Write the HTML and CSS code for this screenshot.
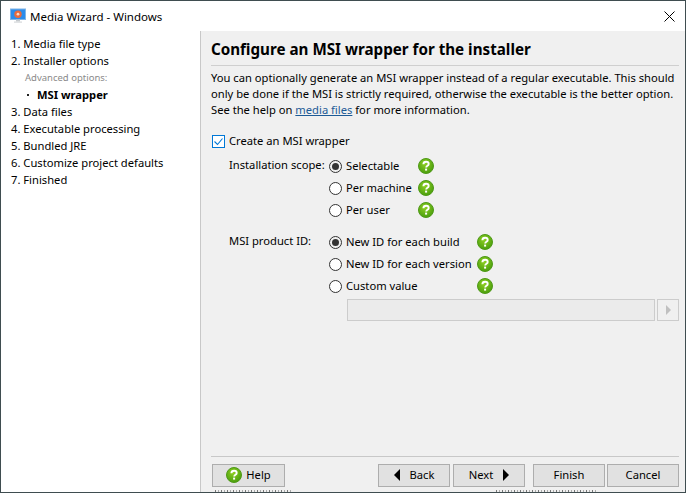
FILE: index.html
```html
<!DOCTYPE html>
<html lang="en">
<head>
<meta charset="utf-8">
<title>Media Wizard - Windows</title>
<link rel="stylesheet" href="styles.css">
</head>
<body>
<svg class="defs" width="0" height="0" aria-hidden="true">
  <defs>
    <radialGradient id="hg" cx="45%" cy="35%" r="70%">
      <stop offset="0" stop-color="#8fd022"/>
      <stop offset="1" stop-color="#459a0c"/>
    </radialGradient>
    <symbol id="help" viewBox="0 0 16 16">
      <circle cx="8" cy="8" r="7.5" fill="url(#hg)" stroke="#4f9a18" stroke-width="1"/>
      <path d="M5.4 6.2c0-1.6 1.2-2.5 2.7-2.5s2.6.9 2.6 2.2c0 1.9-2.4 1.9-2.5 3.6" fill="none" stroke="#fff" stroke-width="1.9"/>
      <rect x="7.1" y="10.6" width="2" height="2" fill="#fff"/>
    </symbol>
  </defs>
</svg>
<div class="window">
  <header class="titlebar">
    <svg class="appicon" viewBox="0 0 16 16" width="16" height="16" aria-hidden="true">
      <rect x="0.5" y="1" width="15" height="10.5" fill="#2a8cec" stroke="#7fb4e6"/>
      <circle cx="8" cy="6.2" r="3.7" fill="#ea6a3c"/>
      <circle cx="8" cy="6.2" r="1.4" fill="#f7d8c8"/>
      <rect x="6" y="11.5" width="4" height="2" fill="#c4c8cc"/>
      <rect x="4" y="13.5" width="8" height="1.2" fill="#d4d7da"/>
    </svg>
    <span class="title">Media Wizard - Windows</span>
    <svg class="close" viewBox="0 0 11 11" width="11" height="11" aria-hidden="true">
      <path d="M.5.5l10 10M10.5.5l-10 10" stroke="#000" stroke-width="1" fill="none"/>
    </svg>
  </header>
  <div class="content">
    <nav class="steps">
      <div class="step">1. Media file type</div>
      <div class="step">2. Installer options</div>
      <div class="step sub-head">Advanced options:</div>
      <div class="step current"><span class="dot"></span><b>MSI wrapper</b></div>
      <div class="step">3. Data files</div>
      <div class="step">4. Executable processing</div>
      <div class="step">5. Bundled JRE</div>
      <div class="step">6. Customize project defaults</div>
      <div class="step">7. Finished</div>
    </nav>
    <main class="main">
      <h1 class="heading">Configure an MSI wrapper for the installer</h1>
      <p class="intro">You can optionally generate an MSI wrapper instead of a regular executable. This should<br>only be done if the MSI is strictly required, otherwise the executable is the better option.<br>See the help on <a href="#">media files</a> for more information.</p>
      <div class="check-row">
        <span class="checkbox">
          <svg viewBox="0 0 13 13" width="13" height="13" aria-hidden="true"><path d="M2.5 6.5l3 3 5-6" fill="none" stroke="#0078d7" stroke-width="1.1"/></svg>
        </span>
        <span class="check-text">Create an MSI wrapper</span>
      </div>
      <div class="group scope">
        <div class="group-label">Installation scope:</div>
        <div class="options">
          <div class="option"><span class="radio on"></span><span class="opt-text">Selectable</span><svg class="help"><use href="#help"/></svg></div>
          <div class="option"><span class="radio"></span><span class="opt-text">Per machine</span><svg class="help"><use href="#help"/></svg></div>
          <div class="option"><span class="radio"></span><span class="opt-text">Per user</span><svg class="help"><use href="#help"/></svg></div>
        </div>
      </div>
      <div class="group product">
        <div class="group-label">MSI product ID:</div>
        <div class="options">
          <div class="option"><span class="radio on"></span><span class="opt-text">New ID for each build</span><svg class="help"><use href="#help"/></svg></div>
          <div class="option"><span class="radio"></span><span class="opt-text">New ID for each version</span><svg class="help"><use href="#help"/></svg></div>
          <div class="option"><span class="radio"></span><span class="opt-text">Custom value</span><svg class="help"><use href="#help"/></svg></div>
        </div>
      </div>
      <div class="field-row">
        <div class="field"></div>
        <div class="field-btn"><span class="tri right grey"></span></div>
      </div>
      <div class="spacer"></div>
      <footer class="footer">
        <button class="btn help-btn" type="button"><svg class="help"><use href="#help"/></svg>Help</button>
        <span class="grow"></span>
        <button class="btn nav-btn" type="button"><span class="tri left"></span>Back</button>
        <button class="btn nav-btn next" type="button">Next<span class="tri right"></span></button>
        <button class="btn nav-btn finish" type="button">Finish</button>
        <button class="btn nav-btn" type="button">Cancel</button>
      </footer>
    </main>
  </div>
</div>
</body>
</html>
```
FILE: styles.css
```css
* { box-sizing: border-box; }
html, body { margin: 0; padding: 0; height: 100%; overflow: hidden; background: #fff; }
body { font-family: "Noto Sans", "Open Sans", sans-serif; font-size: 11.2px; color: #000; }
.defs { display: block; height: 0; }
.window {
  width: 686px;
  height: 493px;
  display: flex;
  flex-direction: column;
  border: 1px solid #3f4d50;
  background: #fff;
}
.titlebar { height: 30px; flex: none; display: flex; align-items: center; padding: 0 10px 0 9px; }
.appicon { flex: none; margin-right: 4px; }
.title { flex: 1; font-size: 11.5px; }
.close { flex: none; }
.content { flex: 1; display: flex; min-height: 0; }
.steps { width: 199px; flex: none; padding: 4px 0 0 10px; background: #fff; }
.step { height: 17px; line-height: 17px; white-space: nowrap; }
.sub-head { padding-left: 14px; font-size: 9.5px; color: #8a8a8a; }
.current { display: flex; align-items: center; padding-left: 16px; }
.current b { font-weight: 700; }
.dot { width: 2px; height: 2px; background: #222; margin-right: 8px; }
.main { flex: 1; display: flex; flex-direction: column; background: #f0f0f0; border-left: 1px solid #c8c8c8; padding: 0 6px 0 10px; min-width: 0; }
.heading { margin: 0; height: 35px; line-height: 36px; font-size: 15.2px; font-weight: 700; border-bottom: 1px solid #cfcfcf; white-space: nowrap; }
.intro { margin: 4px 0 0; line-height: 16px; white-space: nowrap; }
.intro a { color: #1c5a96; text-decoration: underline; }
.check-row { display: flex; align-items: center; height: 14px; margin-top: 16px; padding-left: 1px; }
.check-text { padding-bottom: 2px; }
.checkbox { width: 13px; height: 13px; border: 1px solid #0078d7; background: #fff; margin-right: 4px; display: flex; align-items: center; justify-content: center; flex: none; }
.checkbox svg { flex: none; }
.group { display: flex; padding-left: 18px; }
.scope { margin-top: 7px; }
.product { margin-top: 10px; }
.group-label { width: 100px; flex: none; height: 22px; line-height: 20px; white-space: nowrap; }
.options { display: flex; flex-direction: column; }
.option { display: flex; align-items: center; height: 22px; }
.radio { width: 13px; height: 13px; border-radius: 50%; border: 1px solid #333; background: #fff; flex: none; margin-right: 4px; display: flex; align-items: center; justify-content: center; }
.radio.on { background: #f0f0f0; }
.radio.on::after { content: ""; width: 7px; height: 7px; border-radius: 50%; background: #333; }
.opt-text { white-space: nowrap; padding-bottom: 2px; }
.scope .opt-text { width: 72px; }
.product .opt-text { width: 131px; }
.help { width: 16px; height: 16px; flex: none; }
.field-row { display: flex; margin: 2px 0 0 136px; gap: 2px; height: 22px; flex: none; }
.field { flex: 1; background: #ebebeb; border: 1px solid #ccc; }
.field-btn { width: 22px; flex: none; border: 1px solid #ccc; background: #f0f0f0; display: flex; align-items: center; justify-content: center; }
.spacer { flex: 1; }
.footer {
  display: flex;
  align-items: flex-start;
  height: 36px;
  border-top: 1px solid #c8c8c8;
  padding: 7px 0 0 1px;
  flex: none;
  background-image:
    repeating-linear-gradient(90deg, #777 0 1px, transparent 1px 3px, #aaa 3px 4px, transparent 4px 6px),
    repeating-linear-gradient(90deg, #777 0 1px, transparent 1px 3px, #aaa 3px 4px, transparent 4px 6px);
  background-repeat: no-repeat;
  background-size: 78px 2px, 100px 2px;
  background-position: 4px bottom, 285px bottom;
}
.grow { flex: 1; }
.btn { height: 23px; padding: 0 0 2px; margin: 0; font: inherit; color: #000; background: #e1e1e1; border: 1px solid #adadad; display: flex; align-items: center; justify-content: center; }
.help-btn { width: 73px; }
.help-btn .help { margin-right: 4px; }
.nav-btn { width: 72px; margin-left: 1px; }
.next { margin-left: 3px; }
.finish { margin-left: 8px; margin-right: 1px; }
.tri { display: block; width: 0; height: 0; border-top: 6px solid transparent; border-bottom: 6px solid transparent; }
.tri.left { border-right: 6px solid #000; margin-right: 10px; }
.tri.right { border-left: 6px solid #000; margin-left: 10px; }
.tri.grey { border-left-color: #c0c0c0; margin-left: 0; border-top-width: 5px; border-bottom-width: 5px; border-left-width: 5px; }
```
